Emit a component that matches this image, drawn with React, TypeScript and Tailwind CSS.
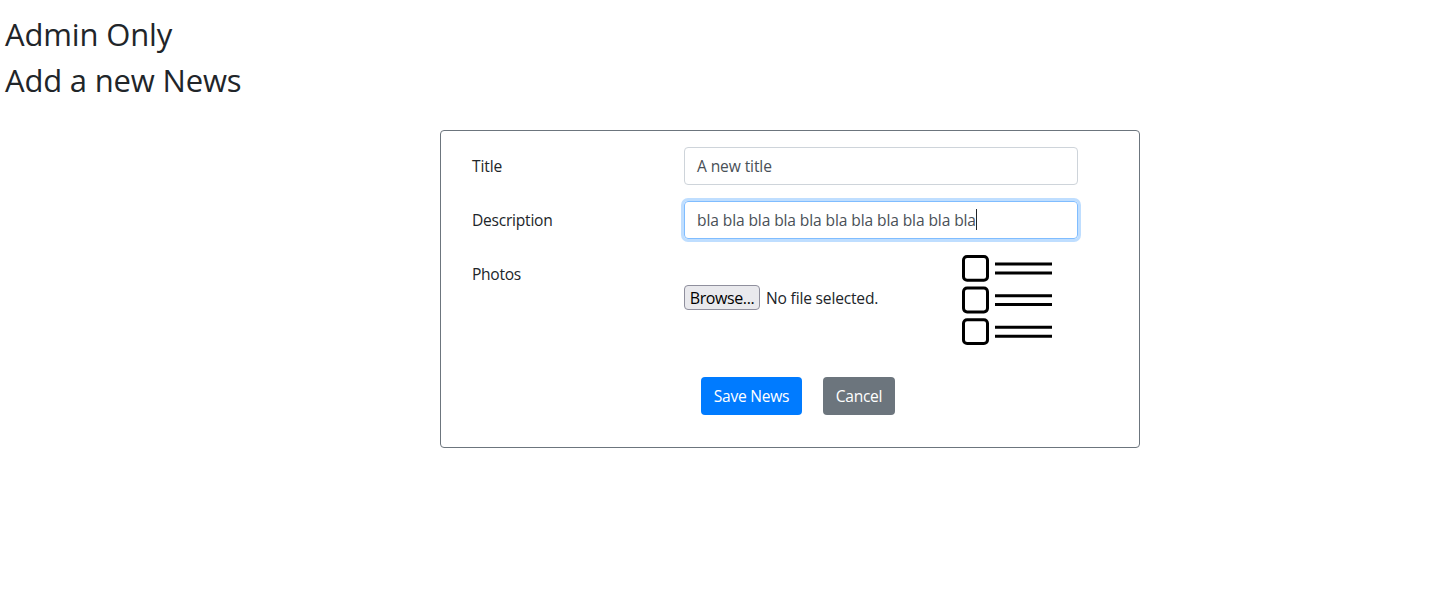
import React from "react";

const rows = [0, 31.6, 63.2];

function ListIcon() {
  return (
    <svg width="90" height="90" viewBox="0 0 90 90" fill="none" stroke="#000" strokeWidth="3" aria-hidden="true">
      {rows.map((y) => (
        <g key={y}>
          <rect x="1.5" y={y + 1.5} width="24" height="23.8" rx="3.6" />
          <path d={`M33 ${y + 9.1}H90M33 ${y + 18}H90`} />
        </g>
      ))}
    </svg>
  );
}

export default function App() {
  return (
    <main className="min-h-screen bg-white pt-[15px] font-['Open_Sans',sans-serif] text-[15.6px] leading-6 tracking-[-0.12px] text-[#212529]">
      <h2 className="mb-2 pl-[5px] text-[31px] leading-[38px] tracking-[-0.15px] whitespace-nowrap">Admin Only</h2>
      <h2 className="pl-[5px] text-[31px] leading-[38px] tracking-[-0.18px] whitespace-nowrap">Add a new News</h2>
      <form className="mt-[31px] ml-[440px] h-[318px] w-[700px] rounded border border-[#6c757d] pt-4 pl-[31px]" onSubmit={(e) => e.preventDefault()}>
        <div className="mb-4 flex h-[38px]">
          <label className="w-[212px] pt-[7px]">Title</label>
          <div className="flex w-[394px] items-center rounded border border-[#ced4da] px-3 text-[#495057]">
            <span>A new title</span>
          </div>
        </div>
        <div className="mb-4 flex h-[38px]">
          <label className="w-[212px] pt-[7px] tracking-[-0.25px]">Description</label>
          <div className="flex w-[394px] items-center rounded border border-[#80bdff] px-3 whitespace-nowrap text-[#495057] shadow-[0_0_0_3px_#bfdeff]">
            <span>bla bla bla bla bla bla bla bla bla bla bla</span>
            <span className="-mt-px h-[21px] w-px bg-[#212529]" />
          </div>
        </div>
        <div className="flex h-[90px]">
          <label className="w-[212px] pt-[7px] tracking-[-0.3px]">Photos</label>
          <div className="flex w-[278px] items-start pt-[30px]">
            <button type="button" className="flex h-[25px] w-[76px] items-center justify-center rounded-[4px] border border-[#8f8f9d] bg-[#e9e9ed] text-base tracking-[-0.4px] whitespace-nowrap text-black">Browse...</button>
            <span className="ml-[6px] pt-[1px] leading-6 tracking-[-0.19px] whitespace-nowrap">No file selected.</span>
          </div>
          <ListIcon />
        </div>
        <div className="mt-8 ml-[229px] flex gap-[21px] text-white">
          <button type="submit" className="h-[38px] w-[101px] rounded-[4px] bg-[#007bff] tracking-[-0.25px] whitespace-nowrap">Save News</button>
          <button type="button" className="h-[38px] w-[72px] rounded-[4px] bg-[#6c757d] tracking-[-0.3px] whitespace-nowrap">Cancel</button>
        </div>
      </form>
    </main>
  );
}
